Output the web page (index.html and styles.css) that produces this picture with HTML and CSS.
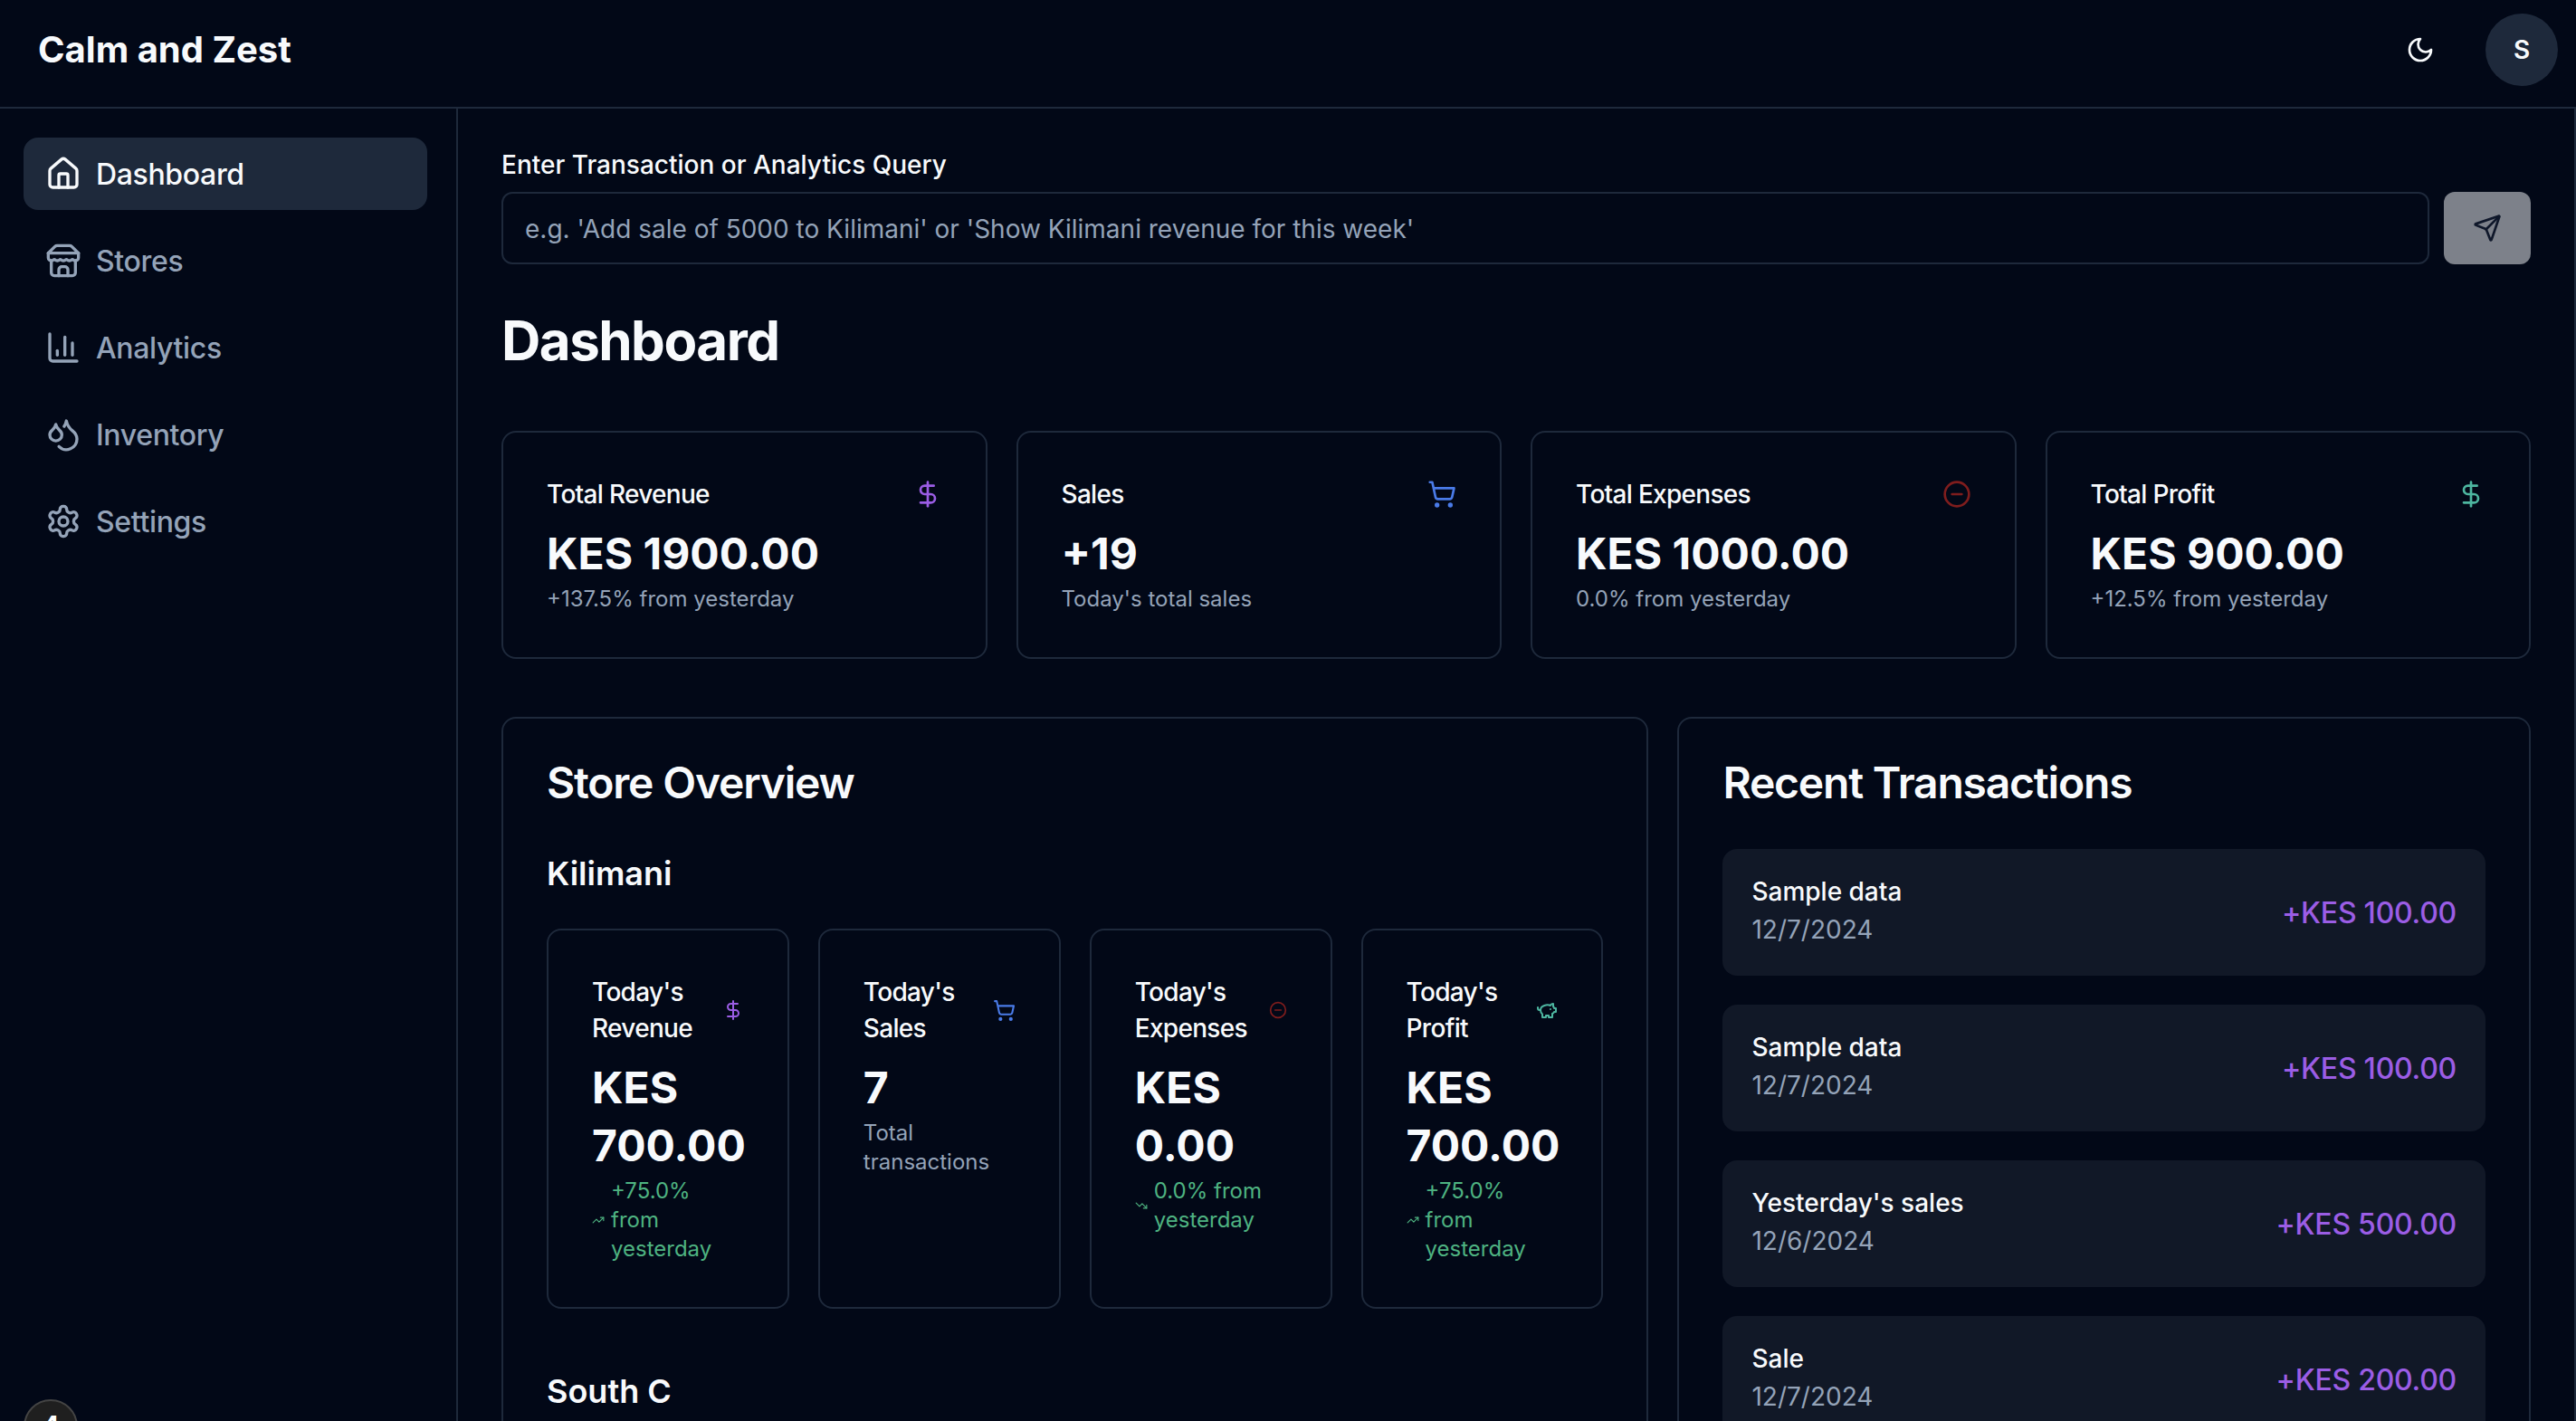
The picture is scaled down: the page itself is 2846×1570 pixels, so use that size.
FILE: index.html
```html
<!DOCTYPE html>
<html lang="en">
<head>
  <meta charset="UTF-8" />
  <meta name="viewport" content="width=device-width, initial-scale=1.0"/>
  <title>Calm and Zest</title>
  <link rel="stylesheet" href="styles.css">
</head>
<body>
  <header class="topbar">
    <div class="brand">Calm and Zest</div>
    <div class="topbar-right">
      <svg class="icon moon" viewBox="0 0 24 24"><path d="M12 3a6 6 0 0 0 9 9 9 9 0 1 1-9-9Z"/></svg>
      <div class="avatar">S</div>
    </div>
  </header>

  <div class="layout">
    <nav class="sidebar">
      <a class="nav-item active">
        <svg class="icon nav-icon" viewBox="0 0 24 24"><path d="M15 21v-8a1 1 0 0 0-1-1h-4a1 1 0 0 0-1 1v8"/><path d="M3 10a2 2 0 0 1 .709-1.528l7-5.999a2 2 0 0 1 2.582 0l7 5.999A2 2 0 0 1 21 10v9a2 2 0 0 1-2 2H5a2 2 0 0 1-2-2z"/></svg>
        Dashboard
      </a>
      <a class="nav-item">
        <svg class="icon nav-icon" viewBox="0 0 24 24"><path d="m2 7 4.41-4.41A2 2 0 0 1 7.83 2h8.34a2 2 0 0 1 1.42.59L22 7"/><path d="M4 12v8a2 2 0 0 0 2 2h12a2 2 0 0 0 2-2v-8"/><path d="M15 22v-4a2 2 0 0 0-2-2h-2a2 2 0 0 0-2 2v4"/><path d="M2 7h20"/><path d="M22 7v3a2 2 0 0 1-2 2a2.7 2.7 0 0 1-1.59-.63.7.7 0 0 0-.82 0A2.7 2.7 0 0 1 16 12a2.7 2.7 0 0 1-1.59-.63.7.7 0 0 0-.82 0A2.7 2.7 0 0 1 12 12a2.7 2.7 0 0 1-1.59-.63.7.7 0 0 0-.82 0A2.7 2.7 0 0 1 8 12a2.7 2.7 0 0 1-1.59-.63.7.7 0 0 0-.82 0A2.7 2.7 0 0 1 4 12a2 2 0 0 1-2-2V7"/></svg>
        Stores
      </a>
      <a class="nav-item">
        <svg class="icon nav-icon" viewBox="0 0 24 24"><path d="M3 3v16a2 2 0 0 0 2 2h16"/><path d="M18 17V9"/><path d="M13 17V5"/><path d="M8 17v-3"/></svg>
        Analytics
      </a>
      <a class="nav-item">
        <svg class="icon nav-icon" viewBox="0 0 24 24"><path d="M7 16.3c2.2 0 4-1.83 4-4.05 0-1.16-.57-2.26-1.71-3.19S7.29 6.75 7 5.3c-.29 1.45-1.14 2.84-2.29 3.76S3 11.1 3 12.25c0 2.22 1.8 4.05 4 4.05z"/><path d="M12.56 6.6A10.97 10.97 0 0 0 14 3.02c.5 2.5 2 4.9 4 6.5s3 3.5 3 5.5a6.98 6.98 0 0 1-11.91 4.97"/></svg>
        Inventory
      </a>
      <a class="nav-item">
        <svg class="icon nav-icon" viewBox="0 0 24 24"><path d="M12.22 2h-.44a2 2 0 0 0-2 2v.18a2 2 0 0 1-1 1.73l-.43.25a2 2 0 0 1-2 0l-.15-.08a2 2 0 0 0-2.73.73l-.22.38a2 2 0 0 0 .73 2.73l.15.1a2 2 0 0 1 1 1.72v.51a2 2 0 0 1-1 1.74l-.15.09a2 2 0 0 0-.73 2.73l.22.38a2 2 0 0 0 2.73.73l.15-.08a2 2 0 0 1 2 0l.43.25a2 2 0 0 1 1 1.73V20a2 2 0 0 0 2 2h.44a2 2 0 0 0 2-2v-.18a2 2 0 0 1 1-1.73l.43-.25a2 2 0 0 1 2 0l.15.08a2 2 0 0 0 2.73-.73l.22-.39a2 2 0 0 0-.73-2.73l-.15-.08a2 2 0 0 1-1-1.74v-.5a2 2 0 0 1 1-1.74l.15-.09a2 2 0 0 0 .73-2.73l-.22-.38a2 2 0 0 0-2.73-.73l-.15.08a2 2 0 0 1-2 0l-.43-.25a2 2 0 0 1-1-1.73V4a2 2 0 0 0-2-2z"/><circle cx="12" cy="12" r="3"/></svg>
        Settings
      </a>
    </nav>

    <main class="content">
      <label class="query-label">Enter Transaction or Analytics Query</label>
      <div class="query-row">
        <input class="query-input" type="text" placeholder="e.g. 'Add sale of 5000 to Kilimani' or 'Show Kilimani revenue for this week'">
        <button class="query-send">
          <svg class="icon send" viewBox="0 0 24 24"><path d="M14.536 21.686a.5.5 0 0 0 .937-.024l6.5-19a.496.496 0 0 0-.635-.635l-19 6.5a.5.5 0 0 0-.024.937l7.93 3.18a2 2 0 0 1 1.112 1.11z"/><path d="m21.854 2.147-10.94 10.939"/></svg>
        </button>
      </div>

      <h1 class="page-title">Dashboard</h1>

      <section class="stats">
        <div class="card">
          <div class="card-head">
            <span class="card-label">Total Revenue</span>
            <svg class="icon card-icon purple" viewBox="0 0 24 24"><line x1="12" x2="12" y1="2" y2="22"/><path d="M17 5H9.5a3.5 3.5 0 0 0 0 7h5a3.5 3.5 0 0 1 0 7H6"/></svg>
          </div>
          <div class="card-value">KES 1900.00</div>
          <div class="card-sub">+137.5% from yesterday</div>
        </div>
        <div class="card">
          <div class="card-head">
            <span class="card-label">Sales</span>
            <svg class="icon card-icon blue" viewBox="0 0 24 24"><circle cx="8" cy="21" r="1"/><circle cx="19" cy="21" r="1"/><path d="M2.05 2.05h2l2.66 12.42a2 2 0 0 0 2 1.58h9.78a2 2 0 0 0 1.95-1.57l1.65-7.43H5.12"/></svg>
          </div>
          <div class="card-value">+19</div>
          <div class="card-sub">Today's total sales</div>
        </div>
        <div class="card">
          <div class="card-head">
            <span class="card-label">Total Expenses</span>
            <svg class="icon card-icon red" viewBox="0 0 24 24"><circle cx="12" cy="12" r="10"/><path d="M8 12h8"/></svg>
          </div>
          <div class="card-value">KES 1000.00</div>
          <div class="card-sub">0.0% from yesterday</div>
        </div>
        <div class="card">
          <div class="card-head">
            <span class="card-label">Total Profit</span>
            <svg class="icon card-icon teal" viewBox="0 0 24 24"><line x1="12" x2="12" y1="2" y2="22"/><path d="M17 5H9.5a3.5 3.5 0 0 0 0 7h5a3.5 3.5 0 0 1 0 7H6"/></svg>
          </div>
          <div class="card-value">KES 900.00</div>
          <div class="card-sub">+12.5% from yesterday</div>
        </div>
      </section>

      <section class="panels">
        <div class="panel panel-stores">
          <h2 class="panel-title">Store Overview</h2>

          <h3 class="store-name">Kilimani</h3>
          <div class="store-cards">
            <div class="card">
              <div class="card-head">
                <span class="card-label">Today's Revenue</span>
                <svg class="icon small-icon purple" viewBox="0 0 24 24"><line x1="12" x2="12" y1="2" y2="22"/><path d="M17 5H9.5a3.5 3.5 0 0 0 0 7h5a3.5 3.5 0 0 1 0 7H6"/></svg>
              </div>
              <div class="card-value">KES 700.00</div>
              <div class="trend">
                <svg class="icon trend-icon" viewBox="0 0 24 24"><polyline points="22 7 13.5 15.5 8.5 10.5 2 17"/><polyline points="16 7 22 7 22 13"/></svg>
                <span>+75.0% from yesterday</span>
              </div>
            </div>
            <div class="card">
              <div class="card-head">
                <span class="card-label">Today's Sales</span>
                <svg class="icon small-icon cart blue" viewBox="0 0 24 24"><circle cx="8" cy="21" r="1"/><circle cx="19" cy="21" r="1"/><path d="M2.05 2.05h2l2.66 12.42a2 2 0 0 0 2 1.58h9.78a2 2 0 0 0 1.95-1.57l1.65-7.43H5.12"/></svg>
              </div>
              <div class="card-value">7</div>
              <div class="card-sub">Total transactions</div>
            </div>
            <div class="card">
              <div class="card-head">
                <span class="card-label">Today's Expenses</span>
                <svg class="icon small-icon minus red" viewBox="0 0 24 24"><circle cx="12" cy="12" r="10"/><path d="M8 12h8"/></svg>
              </div>
              <div class="card-value">KES 0.00</div>
              <div class="trend">
                <svg class="icon trend-icon" viewBox="0 0 24 24"><polyline points="22 17 13.5 8.5 8.5 13.5 2 7"/><polyline points="16 17 22 17 22 11"/></svg>
                <span>0.0% from yesterday</span>
              </div>
            </div>
            <div class="card">
              <div class="card-head">
                <span class="card-label">Today's Profit</span>
                <svg class="icon small-icon teal" viewBox="0 0 24 24"><path d="M19 5c-1.5 0-2.8 1.4-3 2-3.5-1.5-11-.3-11 5 0 1.8 0 3 2 4.5V20h4v-2h3v2h4v-4c1-.5 1.7-1 2-2h2v-4h-2c0-1-.5-1.5-1-2V5z"/><path d="M2 9v1c0 1.1.9 2 2 2h1"/><path d="M16 11h.01"/></svg>
              </div>
              <div class="card-value">KES 700.00</div>
              <div class="trend">
                <svg class="icon trend-icon" viewBox="0 0 24 24"><polyline points="22 7 13.5 15.5 8.5 10.5 2 17"/><polyline points="16 7 22 7 22 13"/></svg>
                <span>+75.0% from yesterday</span>
              </div>
            </div>
          </div>

          <h3 class="store-name next-store">South C</h3>
        </div>

        <div class="panel panel-recent">
          <h2 class="panel-title">Recent Transactions</h2>
          <div class="tx-list">
            <div class="tx-row">
              <div class="tx-info">
                <div class="tx-name">Sample data</div>
                <div class="tx-date">12/7/2024</div>
              </div>
              <div class="tx-amount">+KES 100.00</div>
            </div>
            <div class="tx-row">
              <div class="tx-info">
                <div class="tx-name">Sample data</div>
                <div class="tx-date">12/7/2024</div>
              </div>
              <div class="tx-amount">+KES 100.00</div>
            </div>
            <div class="tx-row">
              <div class="tx-info">
                <div class="tx-name">Yesterday's sales</div>
                <div class="tx-date">12/6/2024</div>
              </div>
              <div class="tx-amount">+KES 500.00</div>
            </div>
            <div class="tx-row">
              <div class="tx-info">
                <div class="tx-name">Sale</div>
                <div class="tx-date">12/7/2024</div>
              </div>
              <div class="tx-amount">+KES 200.00</div>
            </div>
          </div>
        </div>
      </section>
    </main>
  </div>

  <div class="dev-badge">4</div>
</body>
</html>
```

FILE: styles.css
```css
* {
  box-sizing: border-box;
}

html, body {
  height: 100%;
  margin: 0;
  overflow: hidden;
}

body {
  font-family: Inter, "Liberation Sans", sans-serif;
  background-color: #020817;
  color: #f8fafc;
  display: flex;
  flex-direction: column;
}

.icon {
  fill: none;
  stroke: currentColor;
  stroke-width: 2;
  stroke-linecap: round;
  stroke-linejoin: round;
  flex-shrink: 0;
}

.topbar {
  height: 120px;
  flex-shrink: 0;
  border-bottom: 2px solid #1e293b;
  display: flex;
  justify-content: space-between;
  padding: 15px 20px 0 42px;
}

.brand {
  font-size: 40px;
  font-weight: 700;
  line-height: 80px;
}

.topbar-right {
  display: flex;
  align-items: center;
  height: 80px;
  gap: 56px;
}

.moon {
  width: 32px;
  height: 32px;
}

.avatar {
  width: 80px;
  height: 80px;
  border-radius: 50%;
  background-color: #1e293b;
  display: flex;
  align-items: center;
  justify-content: center;
  font-size: 28px;
  font-weight: 600;
}

.layout {
  flex: 1;
  display: flex;
  min-height: 0;
}

.sidebar {
  width: 506px;
  flex-shrink: 0;
  border-right: 2px solid #1e293b;
  padding: 32px 32px 0 26px;
  display: flex;
  flex-direction: column;
  gap: 16px;
}

.nav-item {
  height: 80px;
  padding: 0 24px;
  border-radius: 16px;
  display: flex;
  align-items: center;
  gap: 16px;
  font-size: 32px;
  font-weight: 500;
  letter-spacing: -0.35px;
  color: #94a3b8;
}

.nav-item.active {
  background-color: #1e293b;
  color: #f8fafc;
}

.nav-icon {
  width: 40px;
  height: 40px;
}

.content {
  flex: 1;
  min-width: 0;
  overflow: hidden;
  border-right: 2px solid #1e293b;
  padding: 48px 48px 0;
}

.query-label {
  display: block;
  font-size: 28px;
  font-weight: 500;
  line-height: 28px;
  margin-bottom: 16px;
}

.query-row {
  display: flex;
  gap: 16px;
}

.query-input {
  flex: 1;
  height: 80px;
  background-color: #020817;
  border: 2px solid #1e293b;
  border-radius: 12px;
  padding: 1px 24px 0;
  font-family: inherit;
  font-size: 28px;
  color: #f8fafc;
}

.query-input::placeholder {
  color: #94a3b8;
  opacity: 1;
}

.query-send {
  width: 96px;
  height: 80px;
  border: none;
  border-radius: 12px;
  background-color: #7d818a;
  color: #0f172a;
  display: flex;
  align-items: center;
  justify-content: center;
}

.send {
  width: 32px;
  height: 32px;
}

.page-title {
  font-size: 60px;
  font-weight: 700;
  line-height: 72px;
  letter-spacing: -1.5px;
  margin: 48px 0 64px;
}

.stats {
  display: grid;
  grid-template-columns: repeat(4, minmax(0, 1fr));
  gap: 32px;
}

.card {
  border: 2px solid #1e293b;
  border-radius: 16px;
  padding: 48px;
}

.card-head {
  display: flex;
  align-items: center;
  justify-content: space-between;
  padding-bottom: 14px;
}

.card-label {
  font-size: 28px;
  font-weight: 500;
  line-height: 40px;
  letter-spacing: -0.7px;
}

.card-icon {
  width: 32px;
  height: 32px;
}

.small-icon {
  width: 24px;
  height: 24px;
}

.small-icon.cart {
  width: 25px;
  height: 25px;
}

.small-icon.minus {
  width: 20px;
  height: 20px;
}

.purple { color: #9b5de5; }
.blue { color: #4a7be8; }
.red { color: #7f1d1d; }
.teal { color: #4db6a0; }

.card-value {
  font-size: 48px;
  font-weight: 700;
  line-height: 64px;
  margin-bottom: 2px;
}

.card-sub {
  font-size: 24px;
  line-height: 32px;
  color: #94a3b8;
}

.panels {
  display: grid;
  grid-template-columns: repeat(7, minmax(0, 1fr));
  gap: 32px;
  margin-top: 64px;
}

.panel {
  border: 2px solid #1e293b;
  border-radius: 16px;
  padding: 48px;
}

.panel-stores {
  grid-column: span 4;
}

.panel-recent {
  grid-column: span 3;
}

.panel-title {
  font-size: 48px;
  font-weight: 600;
  line-height: 46px;
  letter-spacing: -1.2px;
  margin: 0 0 50px;
}

.store-name {
  font-size: 36px;
  font-weight: 600;
  line-height: 54px;
  margin: 0 0 34px;
}

.next-store {
  margin-top: 64px;
}

.store-cards {
  display: grid;
  grid-template-columns: repeat(4, minmax(0, 1fr));
  gap: 32px;
}

.trend {
  display: flex;
  align-items: center;
  gap: 7px;
  font-size: 24px;
  line-height: 32px;
  color: #4eb381;
}

.trend-icon {
  width: 14px;
  height: 14px;
}

.tx-list {
  display: flex;
  flex-direction: column;
  gap: 32px;
}

.tx-row {
  height: 140px;
  padding: 0 32px;
  border-radius: 16px;
  background-color: #111827;
  display: flex;
  align-items: center;
  justify-content: space-between;
}

.tx-info {
  padding-bottom: 5px;
}

.tx-name {
  font-size: 28px;
  font-weight: 500;
  line-height: 40px;
}

.tx-date {
  font-size: 28px;
  line-height: 40px;
  margin-top: 2px;
  color: #94a3b8;
}

.tx-amount {
  font-size: 32px;
  font-weight: 500;
  letter-spacing: -0.25px;
  color: #9b5de5;
}

.dev-badge {
  position: fixed;
  left: 26px;
  top: 1546px;
  width: 60px;
  height: 60px;
  border-radius: 50%;
  background-color: #1f1f1f;
  border: 2px solid #444;
  color: #fff;
  font-size: 32px;
  font-weight: 600;
  display: flex;
  align-items: center;
  justify-content: center;
}
```
